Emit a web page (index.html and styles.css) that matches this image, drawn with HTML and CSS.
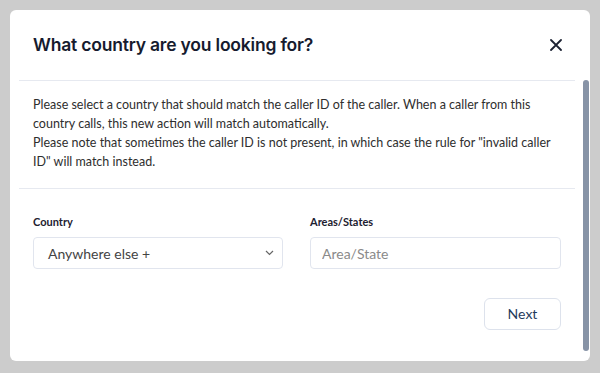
FILE: index.html
```html
<!doctype html>
<html>
<head>
	<meta charset="UTF-8">
	<title>Country rule</title>
    <link rel="stylesheet" href="styles.css">
</head>
<body>
    <div class="modal">
        <div class="modal-hd">
            <h2 class="modal-title">What country are you looking for?</h2>
            <a class="modal-close" href="javascript:void(0);">
                <svg width="12" height="12" viewBox="0 0 12 12"><path d="M1 1L11 11M11 1L1 11" stroke="#1c2233" stroke-width="1.8" stroke-linecap="round"/></svg>
            </a>
        </div>
        <div class="modal-line"></div>
        <p class="modal-desc">Please select a country that should match the caller ID of the caller. When a caller from this country calls, this new action will match automatically.<br>Please note that sometimes the caller ID is not present, in which case the rule for "invalid caller ID" will match instead.</p>
        <div class="modal-line"></div>
        <div class="form">
            <div class="field">
                <label class="field-label">Country</label>
                <div class="select">
                    <span>Anywhere else +</span>
                    <svg width="9" height="6" viewBox="0 0 9 6"><path d="M1 1L4.5 4.5L8 1" fill="none" stroke="#666" stroke-width="1.2"/></svg>
                </div>
            </div>
            <div class="field">
                <label class="field-label">Areas/States</label>
                <input class="input" type="text" placeholder="Area/State">
            </div>
        </div>
        <div class="modal-ft">
            <a class="btn" href="javascript:void(0);">Next</a>
        </div>
        <div class="scroll-thumb"></div>
    </div>
</body>
</html>
```
FILE: styles.css
```css
/* reset */
body,h2,p{margin:0;padding:0;}
html,body{width:100%;height:100%;}
body{background:#cccccc;padding:10px;box-sizing:border-box;font:13px/19px "Lato", "Liberation Sans", sans-serif;}
a{text-decoration:none;}

/* modal */
.modal{position:relative;width:580px;height:351px;background:#fff;border-radius:6px;overflow:hidden;}
.modal-hd{display:flex;align-items:center;justify-content:space-between;height:70px;padding:0 27px 0 23px;}
.modal-title{font:600 17.5px/24px "Inter", sans-serif;color:#161b2e;letter-spacing:-0.2px;}
.modal-close{display:flex;width:14px;height:14px;align-items:center;justify-content:center;}
.modal-line{height:1px;margin:0 15px 0 9px;background:#e6e9f0;}
.modal-desc{padding:14px 30px 17px 23px;color:#2e2e2e;font-size:12.5px;line-height:19px;}

/* form */
.form{display:grid;grid-template-columns:250px 251px;column-gap:27px;padding:25px 0 0 23px;}
.field-label{display:block;font:700 11px/16px "Lato", sans-serif;color:#1d2130;margin-bottom:7px;}
.select,.input{box-sizing:border-box;height:32px;border:1px solid #e1e5ee;border-radius:4px;background:#fff;}
.select{display:flex;align-items:center;justify-content:space-between;padding:0 8px 0 14px;font:14px "Lato", sans-serif;color:#444;}
.input{width:100%;padding:0 11px;font:14px "Lato", sans-serif;color:#333;outline:none;}
.input::placeholder{color:#8a8a8a;}

.modal-ft{display:flex;justify-content:flex-end;padding:29px 29px 0 0;}
.btn{box-sizing:border-box;width:77px;height:32px;border:1px solid #dde2ec;border-radius:6px;text-align:center;font:14px/30px "Lato", sans-serif;color:#1f3b5c;}

.scroll-thumb{position:absolute;right:1px;top:70px;width:6px;height:271px;background:#8793a6;border-radius:3px;}
```
